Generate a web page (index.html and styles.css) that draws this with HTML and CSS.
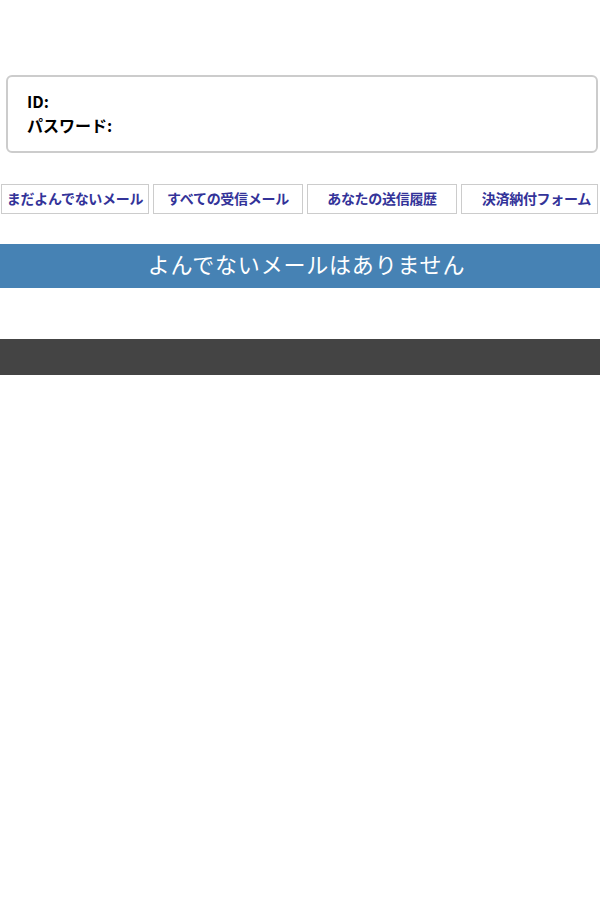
FILE: index.html
```html
<!DOCTYPE html>
<html lang="ja">
<head>
<meta charset="utf-8">
<link rel="stylesheet" href="styles.css">
</head>
<body>
<div class="page">
  <div class="login">
    <div class="line">ID:</div>
    <div class="line">パスワード:</div>
  </div>
  <nav class="tabs">
    <a class="tab">まだよんでないメール</a>
    <a class="tab">すべての受信メール</a>
    <a class="tab">あなたの送信履歴</a>
    <a class="tab tab-last">決済納付フォーム</a>
  </nav>
  <div class="banner">よんでないメールはありません</div>
  <div class="footer"></div>
</div>
</body>
</html>
```
FILE: styles.css
```css
html, body {
  margin: 0;
  padding: 0;
  background: #fff;
}
body {
  font-family: "Noto Sans CJK JP", "Noto Sans", sans-serif;
  color: #000;
}
.page {
  padding-top: 75px;
}
.login {
  margin: 0 2px 0 6px;
  height: 78px;
  box-sizing: border-box;
  border: 2px solid #cccccc;
  border-radius: 6px;
  padding: 12px 0 0 19px;
}
.line {
  font-size: 16px;
  font-weight: bold;
  line-height: 24px;
}
.tabs {
  display: grid;
  grid-template-columns: 148px 150px 150px 137px;
  column-gap: 4px;
  margin: 31px 0 0 1px;
}
.tab {
  height: 30px;
  box-sizing: border-box;
  border: 1px solid #cccccc;
  color: #333399;
  font-size: 14px;
  font-weight: bold;
  display: flex;
  align-items: center;
  justify-content: center;
  white-space: nowrap;
  letter-spacing: -0.3px;
  padding-bottom: 3px;
}
.tab-last {
  justify-content: flex-end;
  padding-right: 6px;
}
.banner {
  margin-top: 30px;
  height: 44px;
  box-sizing: border-box;
  padding: 0 0 6px 13px;
  background: #4682b4;
  color: #fff;
  font-size: 22px;
  letter-spacing: 0.8px;
  display: flex;
  align-items: center;
  justify-content: center;
}
.footer {
  margin-top: 51px;
  height: 36px;
  background: #444444;
}
```
